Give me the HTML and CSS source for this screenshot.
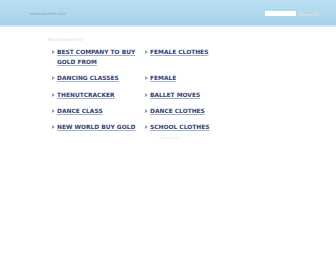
FILE: index.html
```html
<!DOCTYPE html>
<html>
<head>
<meta charset="utf-8">
<link rel="stylesheet" href="styles.css">
</head>
<body>
<div class="header">
  <div class="domain">www.ulozena.com</div>
  <form class="search">
    <input class="search-input" type="text">
    <button class="search-btn" type="button">Search</button>
  </form>
</div>
<div class="content">
  <div class="label">Related Searches</div>
  <ul class="links">
    <li><a href="#">BEST COMPANY TO BUY GOLD FROM</a></li>
    <li><a href="#">FEMALE CLOTHES</a></li>
    <li><a href="#">DANCING CLASSES</a></li>
    <li><a href="#">FEMALE</a></li>
    <li><a href="#">THENUTCRACKER</a></li>
    <li><a href="#">BALLET MOVES</a></li>
    <li><a href="#">DANCE CLASS</a></li>
    <li><a href="#">DANCE CLOTHES</a></li>
    <li><a href="#">NEW WORLD BUY GOLD</a></li>
    <li><a href="#">SCHOOL CLOTHES</a></li>
  </ul>
  <div class="footer">Privacy Policy</div>
</div>
</body>
</html>
```
FILE: styles.css
```css
html, body {
  margin: 0;
  padding: 0;
  background: #ffffff;
  font-family: "DejaVu Sans", Verdana, sans-serif;
}
.header {
  height: 25px;
  background: linear-gradient(to bottom, #b9def2 0%, #aed8ee 60%, #a6d2ea 100%);
  border-bottom: 2px solid #cfe8f4;
  display: flex;
  align-items: center;
  justify-content: space-between;
  padding: 0 17px 0 30px;
}
.domain {
  font-size: 4px;
  color: #8aa3b5;
  margin-top: 2px;
}
.search {
  display: flex;
  align-items: center;
  gap: 3px;
  margin: 2px 0 0;
}
.search-input {
  width: 31px;
  height: 5px;
  padding: 0;
  border: 0;
  background: #ffffff;
}
.search-btn {
  width: 20px;
  height: 5px;
  padding: 0;
  border: 0;
  background: #c4dce9;
  color: #a8c2d2;
  font-size: 3px;
  line-height: 5px;
}
.content {
  padding: 10px 0 0 48px;
}
.label {
  font-size: 4px;
  color: #d6dde4;
  height: 6px;
}
.links {
  list-style: none;
  margin: 4px 0 0 4px;
  padding: 0;
  display: grid;
  grid-template-columns: 93px 100px;
  row-gap: 6.35px;
}
.links li {
  position: relative;
  padding-left: 5px;
  font-size: 5.9px;
  line-height: 10px;
  font-weight: bold;
}
.links li::before {
  content: "";
  position: absolute;
  left: 0;
  top: 3px;
  border-left: 3px solid #9aa3ae;
  border-top: 2px solid transparent;
  border-bottom: 2px solid transparent;
}
.links a {
  color: #34416e;
  text-decoration: underline;
  text-decoration-color: #9fb4d6;
}
.footer {
  margin: 4px 0 0 112px;
  font-size: 3px;
  color: #e2e6ea;
}
```
